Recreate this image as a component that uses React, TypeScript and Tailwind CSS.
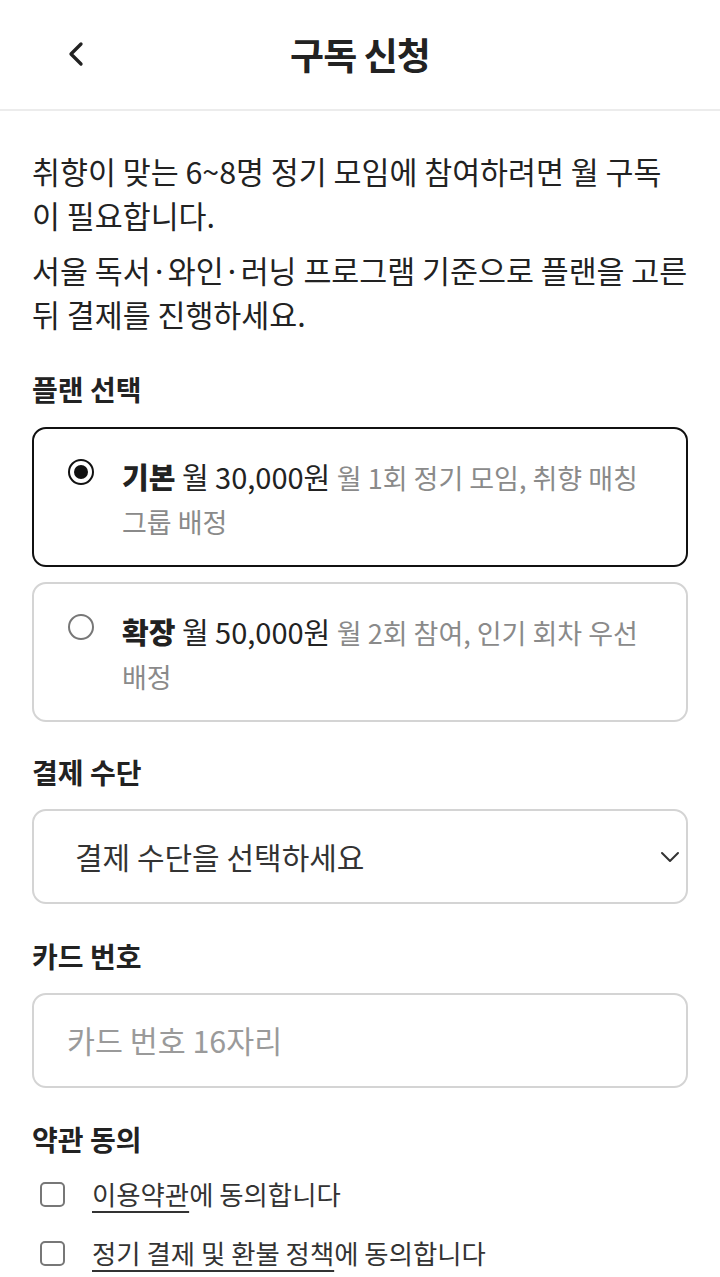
import { ChevronLeft, ChevronDown } from 'lucide-react';

const FONT = { fontFamily: '"Noto Sans CJK KR", "Noto Sans", sans-serif' };

const plans = [
  { id: 'basic', name: '기본', price: '월 30,000원', desc: '월 1회 정기 모임, 취향 매칭 그룹 배정', selected: true },
  { id: 'plus', name: '확장', price: '월 50,000원', desc: '월 2회 참여, 인기 회차 우선 배정', selected: false },
];

export default function App() {
  return (
    <div className="min-h-screen bg-white text-[#222]" style={FONT}>
      {/* Header */}
      <header className="relative h-[111px] flex items-center justify-center border-b-2 border-[#ececec]">
        <button className="absolute left-[56px] top-[34px] text-[#222]">
          <ChevronLeft size={40} strokeWidth={2} />
        </button>
        <h1 className="text-[37px] font-bold tracking-tight">구독 신청</h1>
      </header>

      <main className="px-8 pt-[38px]">
        <p className="text-[30.4px] leading-[44px]">취향이 맞는 6~8명 정기 모임에 참여하려면 월 구독이 필요합니다.</p>
        <p className="text-[30.4px] leading-[44px] mt-[11px]">
          서울 독서·와인·러닝 프로그램 기준으로 플랜을 고른 뒤 결제를 진행하세요.
        </p>

        {/* Plans */}
        <h2 className="text-[28px] font-bold mt-[33px] leading-[40px]">플랜 선택</h2>
        <div className="mt-[18px] flex flex-col gap-[15px]">
          {plans.map(p => (
            <label
              key={p.id}
              className={`flex rounded-[14px] border-2 pl-[34px] pr-6 pt-[26px] pb-[22px] ${
                p.selected ? 'border-[#111]' : 'border-[#d4d4d4]'
              }`}
            >
              <span
                className={`mt-[4px] w-[26px] h-[26px] shrink-0 rounded-full border-2 flex items-center justify-center ${
                  p.selected ? 'border-[#111]' : 'border-[#777]'
                }`}
              >
                {p.selected && <span className="w-[14px] h-[14px] rounded-full bg-[#111]" />}
              </span>
              <span className="ml-[28px] text-[29px] leading-[43px]">
                <b className="font-extrabold">{p.name}</b> {p.price}{' '}
                <span className="text-[27px] text-[#8a8a8a]">{p.desc}</span>
              </span>
            </label>
          ))}
        </div>

        {/* Payment */}
        <h2 className="text-[28px] font-bold mt-[30px] leading-[40px]">결제 수단</h2>
        <div className="mt-[17px] h-[95px] rounded-[14px] border-2 border-[#d4d4d4] flex items-center pl-[41px] pr-0">
          <span className="flex-1 text-[30px] text-[#333]">결제 수단을 선택하세요</span>
          <ChevronDown size={32} strokeWidth={1.5} className="text-[#333]" />
        </div>

        <h2 className="text-[28px] font-bold mt-[32px] leading-[40px]">카드 번호</h2>
        <div className="mt-[17px] h-[95px] rounded-[14px] border-2 border-[#d4d4d4] flex items-center pl-[33px]">
          <span className="text-[30.4px] text-[#9a9a9a]">카드 번호 16자리</span>
        </div>

        {/* Terms */}
        <h2 className="text-[28px] font-bold mt-[31px] leading-[40px]">약관 동의</h2>
        <div className="mt-[15px] flex flex-col gap-[19px] pl-[8px]">
          <div className="flex items-center">
            <span className="w-[25px] h-[25px] rounded-[5px] border-2 border-[#777]" />
            <span className="ml-[27px] text-[26.4px] leading-[40px] text-[#333]">
              <span className="underline underline-offset-[6px] decoration-2">이용약관</span>에 동의합니다
            </span>
          </div>
          <div className="flex items-center">
            <span className="w-[25px] h-[25px] rounded-[5px] border-2 border-[#777]" />
            <span className="ml-[27px] text-[26.4px] leading-[40px] text-[#333]">
              <span className="underline underline-offset-[6px] decoration-2">정기 결제 및 환불 정책</span>에 동의합니다
            </span>
          </div>
        </div>
      </main>
    </div>
  );
}
